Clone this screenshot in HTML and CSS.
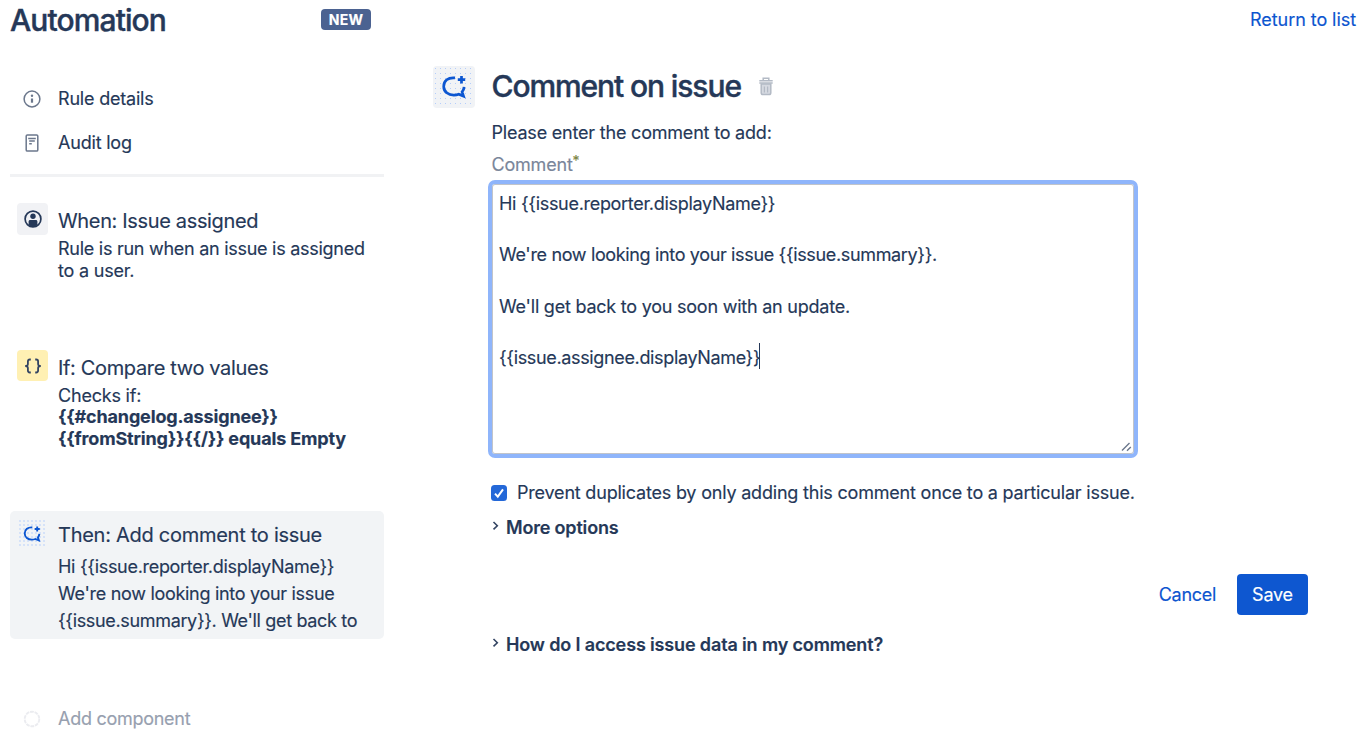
FILE: index.html
```html
<!DOCTYPE html>
<html lang="en">
<head>
<meta charset="utf-8">
<title>Automation</title>
<link rel="stylesheet" href="styles.css">
</head>
<body>
<div class="app">
  <aside class="sidebar">
    <header class="side-head">
      <h1 class="side-title">Automation</h1>
      <span class="badge">NEW</span>
    </header>
    <nav class="nav">
      <a class="nav-item">
        <svg class="nav-icon" viewBox="0 0 18 18"><circle cx="9" cy="9" r="7.9"/><circle class="solid" cx="9" cy="5.8" r="1.2"/><path class="thick" d="M9 8.500v4.200"/></svg>
        <span>Rule details</span>
      </a>
      <a class="nav-item">
        <svg class="nav-icon" viewBox="0 0 18 18"><rect x="3.2" y=".9" width="11.6" height="16.2" rx="1.2"/><path d="M5.2 4.4h7.6M6.2 7h5.600M6.200 9.800h2.600"/></svg>
        <span>Audit log</span>
      </a>
    </nav>
    <section class="step">
      <span class="tile tile-grey">
        <svg width="18" height="18" viewBox="0 0 18 18"><circle cx="9" cy="9" r="7.900" fill="none" stroke="#253858" stroke-width="1.700"/><circle cx="9" cy="6.200" r="2.700" fill="#253858"/><path d="M4.600 14.800v-3.200c0-1 .6-1.600 1.600-1.600h5.600c1 0 1.600.6 1.600 1.600v3.200c-2.500 2.500-6.300 2.500-8.800 0z" fill="#253858"/></svg>
      </span>
      <div class="step-body">
        <h2 class="step-title">When: Issue assigned</h2>
        <p class="step-text"><span class="s-rule">Rule is run when an issue is assigned</span><br>to a user.</p>
      </div>
    </section>
    <section class="step">
      <span class="tile tile-yellow">
        <svg width="18" height="16" viewBox="0 0 18 16" fill="none" stroke="#344563" stroke-width="1.800"><path d="M6.800 1.500h-1c-1.300 0-1.900.6-1.900 1.900v2.500c0 1.300-.8 2.100-2.700 2.100 1.900 0 2.700.8 2.700 2.100v2.500c0 1.300.6 1.900 1.900 1.900h1M11.200 1.500h1c1.300 0 1.900.6 1.900 1.900v2.500c0 1.300.8 2.100 2.700 2.100-1.900 0-2.700.8-2.700 2.100v2.500c0 1.300-.6 1.900-1.900 1.900h-1"/></svg>
      </span>
      <div class="step-body">
        <h2 class="step-title">If: Compare two values</h2>
        <p class="step-text">Checks if:<br><b><span class="s-change">{{#changelog.assignee}}</span><br><span class="s-from">{{fromString}}{{/}} equals Empty</span></b></p>
      </div>
    </section>
    <section class="step step-active">
      <span class="tile tile-dots">
        <svg width="18" height="18" viewBox="0 0 26 26"><path class="bubble" d="M13.500 3.500C7 2.900 2.500 6.700 2.500 12.200c0 5.300 4.600 9 10.500 8.900 1.700 0 3.300-.3 4.700-.9l5.300 2.100-1.400-4.400c1.200-1.400 1.900-3 2-5.100M20.500 2v7.400M16.800 5.700h7.400"/></svg>
      </span>
      <div class="step-body">
        <h2 class="step-title t-then">Then: Add comment to issue</h2>
        <p class="step-text"><span class="s-hi">Hi {{issue.reporter.displayName}}</span><br><span class="s-now">We're now looking into your issue</span><br><span class="s-sum">{{issue.summary}}. We'll get back to</span></p>
      </div>
    </section>
    <a class="add">
      <svg width="18" height="18" viewBox="0 0 18 18"><circle cx="9" cy="9" r="7.300" fill="none" stroke="#ebecf0" stroke-width="1.900" stroke-dasharray="3.800 .8"/></svg>
      <span>Add component</span>
    </a>
  </aside>
  <main class="main">
    <div class="top"><a class="link return">Return to list</a></div>
    <div class="content">
      <span class="tile-large">
        <svg width="26" height="26" viewBox="0 0 26 26"><path class="bubble" d="M14 3.900C7 3.100 2.700 6.900 2.700 12.400c0 5.300 4.600 8.800 10.300 8.700 1.700 0 3.300-.3 4.700-.9l4.800 1.900-1.400-4.200c1.200-1.400 1.900-3 2-5M20.500 2v7.400M16.800 5.700h7.400"/></svg>
      </span>
      <div class="form">
        <header class="form-head">
          <h2 class="form-title">Comment on issue</h2>
          <svg width="14" height="19" viewBox="0 0 14 19" fill="none" stroke="#b3bac5" stroke-width="1.500"><path d="M4.200 3V1.200h5.600V3M.3 3.800h13.400M.3 6h13.400"/><path fill="#d5d9e0" d="M2.200 7v8.800c0 1.200.6 1.800 1.700 1.800h6.200c1.100 0 1.700-.6 1.700-1.800V7z"/><path d="M5.400 9.500v6M8.600 9.500v6" stroke-width="1.200"/></svg>
        </header>
        <p class="prompt">Please enter the comment to add:</p>
        <div class="label">Comment<sup>*</sup></div>
        <div class="textarea">
          <span class="a-hi">Hi {{issue.reporter.displayName}}</span><br><br><span class="a-now">We're now looking into your issue {{issue.summary}}.</span><br><br><span class="a-back">We'll get back to you soon with an update.</span><br><br><span class="a-name">{{issue.assignee.displayName}}</span><i class="caret"></i>
          <svg class="grip" width="11" height="10" viewBox="0 0 11 10"><path d="M1 8.500 8.500 1M6 8.800l3.800-3.800" stroke="#6b778c" stroke-width="1.400"/></svg>
        </div>
        <label class="check">
          <svg width="16" height="16" viewBox="0 0 16 16"><rect width="16" height="16" rx="3.500" fill="#2468d8"/><path d="M4 8.600l2.800 3L12 4.300" fill="none" stroke="#fff" stroke-width="2"/></svg>
          <span>Prevent duplicates by only adding this comment once to a particular issue.</span>
        </label>
        <div class="more"><svg width="7" height="10" viewBox="0 0 7 10"><path d="M1.500 1l3.800 3.700-3.800 3.700"/></svg><span class="m-options">More options</span></div>
        <div class="buttons"><a class="link cancel">Cancel</a><button class="save">Save</button></div>
        <div class="more"><svg width="7" height="10" viewBox="0 0 7 10"><path d="M1.500 1l3.800 3.700-3.800 3.700"/></svg><span class="m-how">How do I access issue data in my comment?</span></div>
      </div>
    </div>
  </main>
</div>
</body>
</html>
```
FILE: styles.css
```css
* { box-sizing: border-box; }
body { margin: 0; background: #fff; color: #253858; font: 18px/22px Inter, "Liberation Sans", sans-serif; letter-spacing: -0.2px; -webkit-text-stroke: 0.15px; overflow: hidden; }
h1, h2, p { margin: 0; font-weight: 400; }
.app { display: flex; height: 738px; white-space: nowrap; }
.sidebar { width: 374px; margin-left: 10px; flex: none; }
.side-head { display: flex; align-items: center; justify-content: space-between; height: 40px; padding-right: 13px; }
.side-title { font-size: 30px; line-height: 40px; font-weight: 500; letter-spacing: -0.9px; -webkit-text-stroke: 0.4px; }
.badge { width: 50px; height: 21px; border-radius: 4px; background: #4b6291; color: #fff; font-size: 14px; line-height: 21px; font-weight: 700; text-align: center; letter-spacing: 0.2px; margin-top: -1px; }
.nav { box-sizing: content-box; height: 97px; padding-top: 37px; border-bottom: 3px solid #f1f2f4; }
.nav-item { display: flex; align-items: center; gap: 17px; height: 44px; padding-left: 13px; }
.nav-icon { width: 18px; height: 18px; fill: none; stroke: #6b778c; stroke-width: 1.5; margin-top: -1px; }
.nav-icon .solid { fill: #6b778c; stroke: none; }
.nav-icon .thick { stroke-width: 2.2; }
.step { display: flex; gap: 10px; height: 147px; padding-left: 7px; }
.nav + .step { margin-top: 26px; }
.tile { width: 31px; height: 32px; border-radius: 4px; flex: none; display: flex; align-items: center; justify-content: center; }
.tile-grey { background: #f1f2f5; }
.tile-yellow { background: #fff0b3; height: 31px; }
.tile-dots, .tile-large { background-image: radial-gradient(circle, #b4cdfb 0.6px, transparent 0.8px); background-size: 4px 4px; }
.step-title { font-size: 20px; line-height: 30px; padding-top: 3px; margin-bottom: 2px; letter-spacing: -0.35px; }
.t-then { letter-spacing: -0.27px; }
.s-rule { letter-spacing: -0.27px; }
.s-hi, .s-now, .a-hi { letter-spacing: -0.3px; }
.s-sum { letter-spacing: -0.34px; }
.s-change, .s-from { letter-spacing: -0.16px; }
.a-now, .a-name { letter-spacing: -0.35px; }
.a-back { letter-spacing: -0.23px; }
.m-options { letter-spacing: -0.18px; }
.m-how { letter-spacing: -0.14px; }
.return { letter-spacing: -0.06px; }
.cancel { letter-spacing: -0.3px; }
.step-text b { position: relative; top: -1px; }
.step-active { height: 128px; margin-top: 14px; padding-top: 8px; background: #f2f4f6; border-radius: 5px; }
.step-active .tile { width: 28px; height: 29px; margin: 0 2px 0 1px; }
.step-active .step-title { padding-top: 1px; margin-bottom: 3px; }
.step-active .step-text { line-height: 27px; }
.bubble { fill: none; stroke: #0c56d1; stroke-width: 2.7; }
.add { display: flex; align-items: center; gap: 17px; padding: 69px 0 0 13px; color: #97a0af; letter-spacing: -0.27px; }
.add svg { margin-top: -1px; }
.main { flex: 1; }
.top { height: 66px; padding: 9px 7px 0 0; text-align: right; }
.link { color: #0c55cf; }
.content { display: flex; gap: 16.5px; padding-left: 49px; }
.tile-large { width: 42px; height: 42px; border-radius: 4px; background-color: #f1f3f6; flex: none; display: flex; align-items: center; justify-content: center; background-size: 5px 5px; }
.form { width: 816.5px; }
.form-head { display: flex; align-items: center; gap: 18px; height: 40px; }
.form-title { font-size: 30px; line-height: 40px; font-weight: 500; letter-spacing: -1.1px; -webkit-text-stroke: 0.4px; margin-top: -1px; }
.prompt { padding-top: 16px; }
.label { padding-top: 10px; color: #7a869a; height: 32px; }
.label sup { font-size: 14px; line-height: 0; color: #7b8542; vertical-align: 5px; }
.textarea { position: relative; width: 650px; height: 278px; margin: 4px 0 0 -3.5px; padding: 7px 0 0 7px; border: 4px solid #8fb5fb; border-radius: 7px; box-shadow: inset 0 0 0 1px #c1c4ca; line-height: 25.7px; }
.caret { display: inline-block; width: 1px; height: 26px; background: #253858; vertical-align: -5px; margin: -9px 0 -9px -1px; position: relative; top: -9px; }
.grip { position: absolute; right: 2px; bottom: 2px; }
.check { display: flex; align-items: center; gap: 10px; padding-top: 24px; height: 46px; margin-left: -0.5px; }
.more { display: flex; align-items: center; gap: 7.5px; height: 22px; font-weight: 600; margin-top: 13px; }
.more svg { fill: none; stroke: #344563; stroke-width: 1.6; margin-top: -4px; }
.buttons { display: flex; align-items: center; justify-content: flex-end; gap: 21px; height: 41px; margin-top: 35px; }
.save { width: 71px; height: 41px; border: 0; padding: 0; border-radius: 4px; background: #0e57d0; color: #fff; font: inherit; letter-spacing: inherit; }
.buttons + .more { margin-top: 19px; }
```
